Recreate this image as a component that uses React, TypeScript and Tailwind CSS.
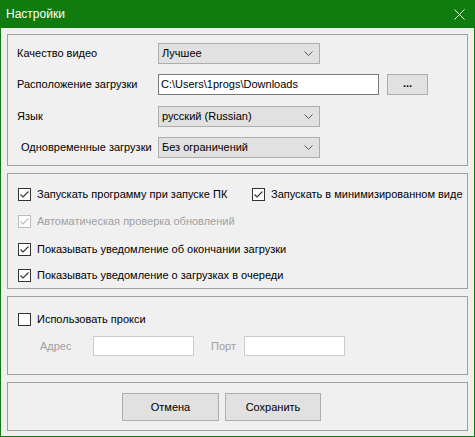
import React from "react";

const font = { fontFamily: '"Liberation Sans", Arial, sans-serif' };

function Chevron() {
  return (
    <svg width="9" height="5" viewBox="0 0 9 5" className="shrink-0">
      <polyline points="0.5,0.5 4.5,4.5 8.5,0.5" fill="none" stroke="#555" strokeWidth="1" />
    </svg>
  );
}

function Select({ value }: { value: string }) {
  return (
    <div className="flex h-[21px] w-[162px] items-center justify-between border border-[#adadad] bg-[#e1e1e1] pl-[3px] pr-[6px] text-black">
      <span className="whitespace-nowrap">{value}</span>
      <Chevron />
    </div>
  );
}

function Check({ checked, disabled }: { checked: boolean; disabled?: boolean }) {
  const c = disabled ? "#bcbcbc" : "#333333";
  return (
    <div
      className={
        "flex h-[13px] w-[13px] shrink-0 items-center justify-center border bg-white " +
        (disabled ? "border-[#bcbcbc]" : "border-[#333333]")
      }
    >
      {checked && (
        <svg width="11" height="11" viewBox="0 0 11 11">
          <polyline points="1.5,5.5 4,8 9.5,2.5" fill="none" stroke={c} strokeWidth="1.1" />
        </svg>
      )}
    </div>
  );
}

function CheckRow({ label, checked, disabled }: { label: string; checked: boolean; disabled?: boolean }) {
  return (
    <div className="flex h-[13px] items-center gap-[6px] whitespace-nowrap">
      <Check checked={checked} disabled={disabled} />
      <span className={"leading-none " + (disabled ? "text-[#a0a0a0]" : "text-black")}>{label}</span>
    </div>
  );
}

export default function App() {
  return (
    <div className="h-[437px] w-[475px] bg-[#107c10]" style={font}>
      <div className="flex h-[28px] items-center justify-between pl-[6px] pr-[10px] text-white">
        <span className="text-[12px]">Настройки</span>
        <svg width="11" height="11" viewBox="0 0 11 11">
          <path d="M0.5 0.5 L10.5 10.5 M10.5 0.5 L0.5 10.5" stroke="#fff" strokeWidth="1" />
        </svg>
      </div>
      <div className="mx-[1px] flex h-[408px] flex-col gap-[7px] whitespace-nowrap bg-[#f0f0f0] px-[6px] pt-[6px] text-[11px] text-black">
        {/* Group 1 */}
        <div className="flex h-[132px] flex-col border border-[#a0a0a0] pt-[8px]">
          <div className="flex h-[21px] items-center">
            <span className="w-[150px] pl-[9px]">Качество видео</span>
            <Select value="Лучшее" />
          </div>
          <div className="mt-[10px] flex h-[21px] items-center">
            <span className="w-[150px] pl-[9px]">Расположение загрузки</span>
            <div className="flex h-[21px] w-[221px] items-center border border-[#7a7a7a] bg-white pl-[2px]">
              C:\Users\1progs\Downloads
            </div>
            <div className="ml-[8px] flex h-[21px] w-[41px] items-center justify-center border border-[#adadad] bg-[#e1e1e1] pb-[3px] font-bold">
              ...
            </div>
          </div>
          <div className="mt-[11px] flex h-[21px] items-center">
            <span className="w-[150px] pl-[9px]">Язык</span>
            <Select value="русский (Russian)" />
          </div>
          <div className="mt-[10px] flex h-[21px] items-center">
            <span className="w-[150px] pl-[13px]">Одновременные загрузки</span>
            <Select value="Без ограничений" />
          </div>
        </div>

        {/* Group 2 */}
        <div className="flex h-[116px] flex-col border border-[#a0a0a0] pl-[10px] pt-[14px]">
          <div className="flex">
            <div className="w-[234px]">
              <CheckRow label="Запускать программу при запуске ПК" checked />
            </div>
            <CheckRow label="Запускать в минимизированном виде" checked />
          </div>
          <div className="mt-[14px]">
            <CheckRow label="Автоматическая проверка обновлений" checked disabled />
          </div>
          <div className="mt-[15px]">
            <CheckRow label="Показывать уведомление об окончании загрузки" checked />
          </div>
          <div className="mt-[13px]">
            <CheckRow label="Показывать уведомление о загрузках в очереди" checked />
          </div>
        </div>

        {/* Group 3 */}
        <div className="flex h-[79px] flex-col border border-[#a0a0a0] pl-[10px] pt-[16px]">
          <CheckRow label="Использовать прокси" checked={false} />
          <div className="mt-[10px] flex h-[20px] items-center">
            <span className="w-[75px] pl-[22px] text-[#a0a0a0]">Адрес</span>
            <div className="h-[20px] w-[101px] border border-[#cccccc] bg-white" />
            <span className="w-[50px] pl-[17px] text-[#a0a0a0]">Порт</span>
            <div className="h-[20px] w-[101px] border border-[#cccccc] bg-white" />
          </div>
        </div>

        {/* Group 4 */}
        <div className="flex h-[49px] items-start gap-[6px] border border-[#a0a0a0] pl-[114px] pt-[10px]">
          <div className="flex h-[28px] w-[97px] items-center justify-center border border-[#adadad] bg-[#e1e1e1]">
            Отмена
          </div>
          <div className="flex h-[28px] w-[96px] items-center justify-center border border-[#adadad] bg-[#e1e1e1]">
            Сохранить
          </div>
        </div>
      </div>
    </div>
  );
}
